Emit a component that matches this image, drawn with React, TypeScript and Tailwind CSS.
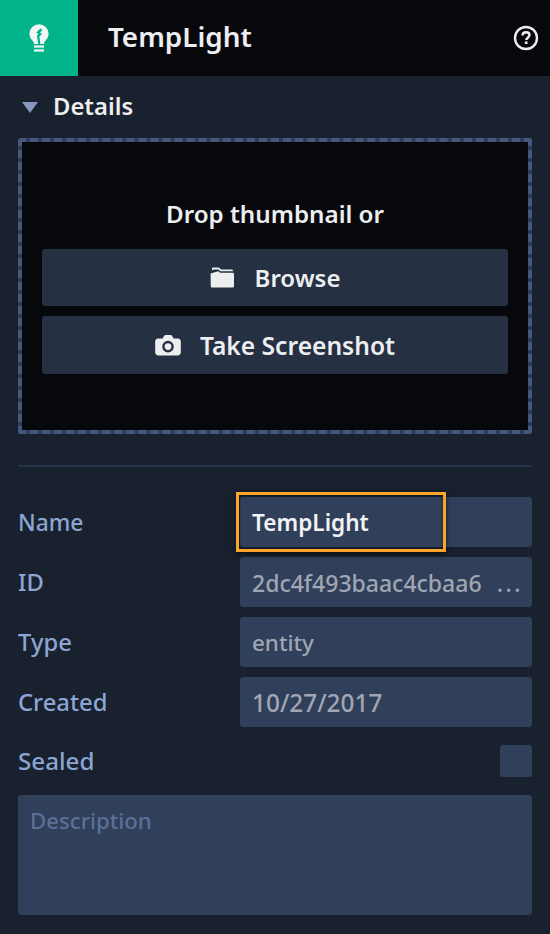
import type { ReactNode } from "react";

const rows: { label: string; value: ReactNode; cls: string }[] = [
  {
    label: "ID",
    value: (
      <>
        <span>2dc4f493baac4cbaa6</span>
        <span className="tracking-[2.5px] mr-[-3px]">...</span>
      </>
    ),
    cls: "text-[23px]",
  },
  { label: "Type", value: <span>entity</span>, cls: "text-[22.4px]" },
  { label: "Created", value: <span>10/27/2017</span>, cls: "text-[24.4px]" },
];

const Bulb = () => (
  <svg width="20" height="28" viewBox="0 0 20 28" fill="none">
    <path
      d="M10 0.2a9.6 9.6 0 0 0-9.6 9.6c0 3.4 1.9 5.3 3.2 6.9.9 1.1 1.3 2 1.4 3.3h10c.1-1.3.5-2.2 1.4-3.3 1.3-1.6 3.2-3.5 3.2-6.9A9.6 9.6 0 0 0 10 0.2Z"
      fill="#f2f6f5"
    />
    <path
      d="M11.5 4.5 7.2 8.6l2.4 1.3-1.7 1.7 1.3 8.4h2.2l-1-7.6 2.6-2.4-2-1.5 2.4-2.6Z"
      fill="#00b388"
    />
    <rect x="5" y="21.4" width="10" height="2.2" fill="#f2f6f5" />
    <rect x="5" y="25.4" width="10" height="2.2" fill="#f2f6f5" />
  </svg>
);

const Help = () => (
  <svg width="26" height="26" viewBox="0 0 26 26" fill="none">
    <circle cx="13" cy="13" r="11" stroke="#eceef0" strokeWidth="2.4" />
    <path
      d="M9.6 10.4c0-2 1.5-3.2 3.5-3.2s3.4 1.1 3.4 2.9c0 2.6-3.2 2.6-3.2 4.9"
      stroke="#eceef0"
      strokeWidth="2.4"
    />
    <rect x="11.9" y="16.4" width="2.6" height="2.6" fill="#eceef0" />
  </svg>
);

const FolderIcon = () => (
  <svg width="24" height="21" viewBox="0 0 24 21" fill="#eceef0">
    <path d="M2 3.4V1.6C2 .8 2.6.4 3.4.4h4.8c.6 0 1 .2 1.4.7l1.4 1.5h10.6c.8 0 1.4.4 1.4 1.1v.6H10.4L8.6 2.6H3.6L2 3.4Z" />
    <path d="M.6 6.4 8.2 4.2l2 1.6h13l.8 1V19c0 1-.7 1.6-1.6 1.6H2.4C1.4 20.6.8 20 .8 19L.6 6.4Z" />
  </svg>
);

const CameraIcon = () => (
  <svg width="26" height="21" viewBox="0 0 26 21" fill="none">
    <path
      d="M3 3.6h4.6L9.2.8C9.5.3 10 0 10.6 0h5c.6 0 1.1.3 1.4.8l1.6 2.8H23c1.6 0 2.8 1.2 2.8 2.8v11.2c0 1.6-1.2 2.8-2.8 2.8H3C1.4 20.4.2 19.2.2 17.6V6.4C.2 4.8 1.4 3.6 3 3.6Z"
      fill="#eceef0"
    />
    <circle cx="13" cy="11.6" r="4.6" stroke="#253042" strokeWidth="2.4" />
  </svg>
);

export default function App() {
  return (
    <div
      className="w-[550px] h-[934px] overflow-hidden bg-[#19202e] text-[#eceef0]"
      style={{ fontFamily: '"Noto Sans", "Open Sans", sans-serif' }}
    >
      <header className="h-[76px] flex items-center bg-[#07080c]">
        <div className="w-[78px] h-full flex items-center justify-center bg-[#00b388]">
          <Bulb />
        </div>
        <h1 className="ml-[30px] mb-[2px] text-[27.8px] font-semibold leading-none">TempLight</h1>
        <div className="ml-auto mr-[11px] flex">
          <Help />
        </div>
      </header>

      <div className="px-[18px]">
        <div className="h-[62px] flex items-center gap-[15px] pl-[4px]">
          <span className="w-0 h-0 border-x-[8px] border-x-transparent border-t-[11px] border-t-[#8798bd] mt-[1px]" />
          <span className="mb-[1px] text-[23.8px] font-semibold leading-none">Details</span>
        </div>

        <div className="h-[296px] rounded-[3px] bg-[#2f3d58]">
          <div className="h-full rounded-[3px] border-4 border-dashed border-[#44587e] bg-[#07080c] bg-clip-padding px-[20px] flex flex-col">
            <p className="mt-[57px] h-[50px] text-center text-[24.2px] font-semibold leading-[30px]">Drop thumbnail or</p>
            <button className="h-[57px] rounded-[3px] bg-[#253042] flex items-center justify-center gap-[21px] text-[24px] font-semibold">
              <FolderIcon />
              Browse
            </button>
            <button className="mt-[10px] h-[58px] rounded-[3px] bg-[#253042] flex items-center justify-center gap-[19px] text-[24.6px] font-semibold">
              <CameraIcon />
              <span className="mt-[2px]">Take Screenshot</span>
            </button>
          </div>
        </div>

        <div className="mt-[31px] h-[2px] bg-[#263247]" />

        <div className="mt-[30px] flex flex-col gap-[10px]">
          <div className="h-[50px] flex items-center">
            <span className="w-[222px] pt-[3px] shrink-0 text-[22.8px] font-medium text-[#8ba6d3]">Name</span>
            <div className="relative flex-1 h-full rounded-[3px] bg-[#303f5a] flex items-center pl-[12px] text-[22.6px] font-semibold text-[#f2f3f5]">
              <span className="mt-[2px]">TempLight</span>
              <div className="absolute left-[-4px] top-[-5px] w-[210px] h-[60px] border-[3px] border-[#f8a528] shadow-[0_2px_6px_rgba(0,0,0,0.5),inset_0_0_3px_rgba(0,0,0,0.5)]" />
            </div>
          </div>
          {rows.map((r) => (
            <div key={r.label} className="h-[50px] flex items-center">
              <span className="w-[222px] pt-[2px] shrink-0 text-[23.8px] font-medium text-[#8ba6d3]">{r.label}</span>
              <div className={`flex-1 h-full rounded-[3px] bg-[#303f5a] flex items-center justify-between px-[12px] pt-[2px] font-medium text-[#a0a6b3] ${r.cls}`}>
                {r.value}
              </div>
            </div>
          ))}
        </div>

        <div className="mt-[17px] h-[33px] flex items-center justify-between">
          <span className="pt-[1px] text-[24.2px] font-medium text-[#8ba6d3]">Sealed</span>
          <div className="w-[32px] h-[32px] rounded-[3px] bg-[#303f5a]" />
        </div>

        <div className="mt-[18px] h-[120px] rounded-[3px] bg-[#303f5a] px-[12px] pt-[8px] text-[22.2px] font-medium text-[#5a7099] leading-[36px]">
          Description
        </div>
      </div>
    </div>
  );
}
